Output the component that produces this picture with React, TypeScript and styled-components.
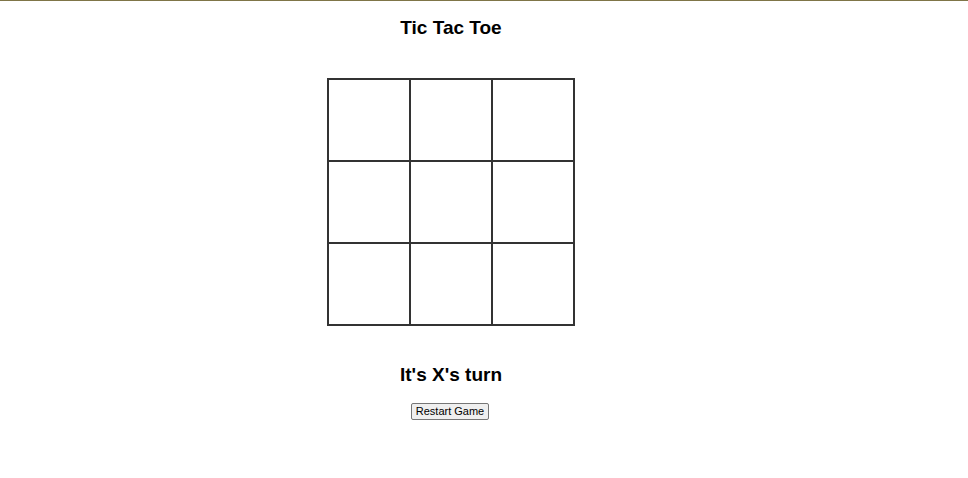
import React, { useState } from "react";
import styled, { createGlobalStyle } from "styled-components";

const Global = createGlobalStyle`
  html, body { margin: 0; padding: 0; background: #ffffff; }
  body {
    border-top: 1px solid #7f7548;
    font-family: "Liberation Sans", Arial, sans-serif;
    color: #000;
  }
`;

const Page = styled.div`
  width: 902px;
  display: flex;
  flex-direction: column;
  align-items: center;
`;

const Title = styled.h1`
  margin: 15px 0 0;
  font-size: 19px;
  line-height: 23px;
  font-weight: bold;
`;

const Board = styled.div`
  margin-top: 39px;
  display: grid;
  grid-template-columns: repeat(3, 82px);
  grid-template-rows: repeat(3, 82px);
  border: 1px solid #333333;
`;

const Cell = styled.button`
  box-sizing: border-box;
  width: 82px;
  height: 82px;
  margin: 0;
  padding: 0;
  border: 1px solid #333333;
  background: #ffffff;
  font-family: "Liberation Sans", Arial, sans-serif;
  font-size: 40px;
  font-weight: bold;
  cursor: pointer;
`;

const Status = styled.h2`
  margin: 37px 0 0;
  font-size: 19px;
  line-height: 23px;
  font-weight: bold;
`;

const RestartButton = styled.button`
  margin: 17px 2px 0 0;
  box-sizing: border-box;
  height: 17px;
  padding: 0 4px;
  font-family: "Liberation Sans", Arial, sans-serif;
  font-size: 11px;
  line-height: 13px;
  color: #000;
  background: #efefef;
  border: 1px solid #767676;
  border-radius: 2px;
`;

export default function App() {
  const [cells, setCells] = useState<(string | null)[]>(Array(9).fill(null));
  const [xNext, setXNext] = useState(true);

  const play = (i: number) => {
    if (cells[i]) return;
    const next = cells.slice();
    next[i] = xNext ? "X" : "O";
    setCells(next);
    setXNext(!xNext);
  };

  return (
    <>
      <Global />
      <Page>
        <Title>Tic Tac Toe</Title>
        <Board>
          {cells.map((c, i) => (
            <Cell key={i} onClick={() => play(i)}>
              {c}
            </Cell>
          ))}
        </Board>
        <Status>It's {xNext ? "X" : "O"}'s turn</Status>
        <RestartButton
          onClick={() => {
            setCells(Array(9).fill(null));
            setXNext(true);
          }}
        >
          Restart Game
        </RestartButton>
      </Page>
    </>
  );
}
